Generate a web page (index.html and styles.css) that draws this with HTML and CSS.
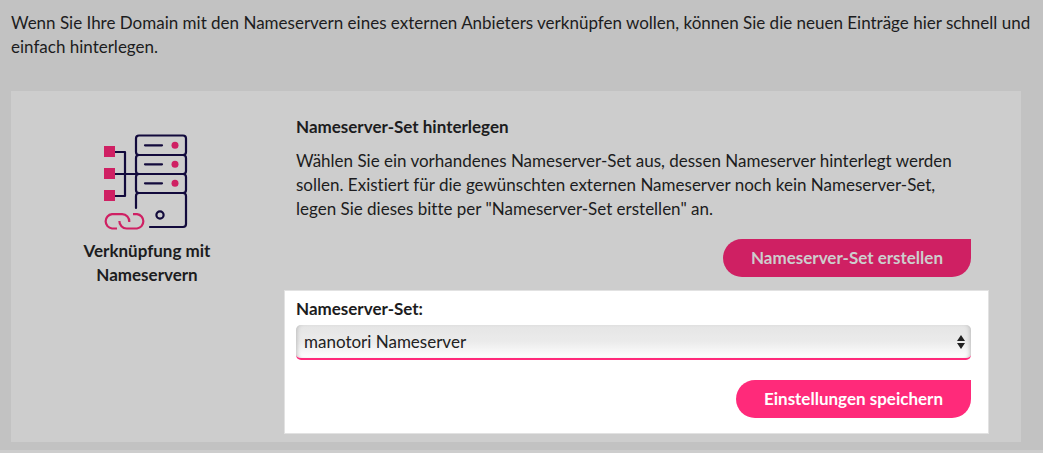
FILE: index.html
```
<!DOCTYPE html>
<html lang="de">

<head>
    <meta charset="utf-8">
    <meta name="viewport" content="width=device-width, initial-scale=1">
    <title>Nameserver</title>
    <link rel="stylesheet" href="styles.css">
</head>

<body>
    <main class="page">
        <p class="intro">Wenn Sie Ihre Domain mit den Nameservern eines externen Anbieters verknüpfen wollen, können Sie die neuen Einträge hier schnell und einfach hinterlegen.</p>

        <section class="card">
            <div class="topic">
                <svg class="topic-icon" viewBox="0 0 86 98" width="86" height="98" fill="none" stroke-width="2.2" stroke-linecap="round" stroke-linejoin="round" aria-hidden="true">
                    <!-- server -->
                    <g stroke="#120a3c">
                        <path d="M32 75V63Q32 60 35 60Q32 60 32 57V44Q32 41 35 41Q32 41 32 38V25Q32 22 35 22Q32 22 32 19V5.500Q32 2.500 35 2.500H79Q82 2.500 82 5.500V19Q82 22 79 22Q82 22 82 25V38Q82 41 79 41Q82 41 82 44V57Q82 60 79 60Q82 60 82 63V91Q82 94 79 94H46" />
                        <path d="M35 22H79M35 41H79M35 60H79" />
                        <path d="M41 12.300H58M41 31.300H58M41 50.300H58" />
                        <circle cx="56" cy="82" r="3.6" />
                        <path d="M11 19H21V63H11M11 41H34" />
                    </g>
                    <g fill="#cf2063">
                        <circle cx="71" cy="12.300" r="3.5" />
                        <circle cx="71" cy="31.300" r="3.5" />
                        <circle cx="71" cy="50.300" r="3.5" />
                        <path d="M0 13H11V24H0zM0 35H11V46H0zM0 57H11V68H0z" />
                    </g>
                    <!-- chain -->
                    <g stroke="#cf2063" stroke-linecap="butt">
                        <path d="M13 95.5H8A7.2 7.2 0 0 1 8 81.2H18A7.2 7.2 0 0 1 25.3 89" />
                        <path d="M15.4 88A7.2 7.2 0 0 0 22.7 95.5H33A7.2 7.2 0 0 0 33 81.2H29" />
                    </g>
                </svg>
                <h2 class="topic-title">Verknüpfung mit Nameservern</h2>
            </div>

            <div class="content">
                <div class="description">
                    <h3 class="heading">Nameserver-Set hinterlegen</h3>
                    <p class="text">Wählen Sie ein vorhandenes Nameserver-Set aus, dessen Nameserver hinterlegt werden sollen. Existiert für die gewünschten externen Nameserver noch kein Nameserver-Set, legen Sie dieses bitte per "Nameserver-Set erstellen" an.</p>
                    <button type="button" class="button button-dim">Nameserver-Set erstellen</button>
                </div>

                <form class="settings">
                    <label class="label" for="nameserver-set">Nameserver-Set:</label>
                    <div class="select-box">
                        <select class="select" id="nameserver-set">
                            <option>manotori Nameserver</option>
                        </select>
                        <svg class="arrows" viewBox="0 0 8 14" width="8" height="14" fill="#222" aria-hidden="true">
                            <path d="M4 0L8 6H0zM4 14L0 8H8z" />
                        </svg>
                    </div>
                    <button type="button" class="button">Einstellungen speichern</button>
                </form>
            </div>
        </section>
    </main>
</body>

</html>
```
FILE: styles.css
```
* {
    box-sizing: border-box;
}

html {
    background: #cdcdcd;
}

body {
    margin: 0;
    color: #1c1c20;
    font-family: Lato, "Open Sans", sans-serif;
    font-size: 17px;
    font-variant-ligatures: none;
    line-height: 24px;
}

.page {
    padding: 11px 22px 8px 11px;
    background: #c2c2c2;
}

.intro {
    margin: 0 -16px 32px 0;
}

.card {
    display: grid;
    grid-template-columns: 273px 1fr;
    padding: 24px 32px 8px 0;
    background: #cdcdcd;
}

.topic {
    display: flex;
    flex-direction: column;
    align-items: center;
    padding: 18px 57px 0 56px;
    text-align: center;
}

.topic-icon {
    margin-bottom: 8px;
}

.topic-title,
.heading {
    margin: 0;
    font-size: 17px;
    font-weight: 700;
}

.description,
.settings {
    display: flex;
    flex-direction: column;
    padding: 0 18px 0 12px;
}

.heading {
    margin-bottom: 10px;
}

.text {
    margin: 0 0 18px;
}

.button {
    align-self: flex-end;
    height: 38px;
    padding: 0 28px;
    border: 0;
    border-radius: 19px 0 19px 19px;
    background: #ff2a7a;
    color: #fff;
    font: inherit;
    font-weight: 700;
    cursor: pointer;
}

.button-dim {
    background: #cf2063;
    color: #cdcdcd;
}

.settings {
    margin-top: 13px;
    padding: 6px 17px 15px 11px;
    border: 1px solid #e2e2e2;
    background: #fff;
}

.label {
    margin-bottom: 4px;
    font-weight: 700;
}

.select-box {
    position: relative;
    margin-bottom: 20px;
}

.select {
    display: block;
    width: 100%;
    height: 35px;
    padding: 0 24px 0 8px;
    appearance: none;
    border: 0;
    border-bottom: 2px solid #ff2a7a;
    border-radius: 5px;
    background: linear-gradient(#e5e5e5, #ebebeb 50%, #fff);
    box-shadow: inset 4px 0 4px -3px #bbb, inset -4px 0 4px -3px #bbb;
    color: #222;
    font: inherit;
}

/* sits on top of the native control */
.arrows {
    position: absolute;
    top: 10px;
    right: 6px;
    pointer-events: none;
}
```
